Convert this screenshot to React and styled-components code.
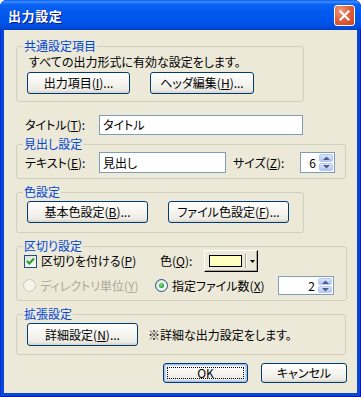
import React from "react";
import styled, { createGlobalStyle } from "styled-components";

const Global = createGlobalStyle`
  html, body { margin: 0; padding: 0; background: #ffffff; }
  body { font-family: "Noto Sans CJK JP", "Noto Sans", sans-serif; }
  * { box-sizing: border-box; }
`;

const FONT = `"Noto Sans CJK JP", "Noto Sans", sans-serif`;

const Window = styled.div`
  width: 361px;
  height: 397px;
  display: flex;
  flex-direction: column;
  background: #0846d8;
  border-radius: 7px 7px 0 0;
  overflow: hidden;
  box-shadow: inset 1px 0 0 #0831d9, inset -1px 0 0 #001ea0, inset 0 -1px 0 #001ea0;
`;

const TitleBar = styled.div`
  height: 30px;
  flex: none;
  display: flex;
  align-items: center;
  justify-content: space-between;
  padding: 0 6px 0 8px;
  background: linear-gradient(
    180deg,
    #0a5cf0 0%,
    #3b8cff 6%,
    #0c64f4 14%,
    #0058ee 40%,
    #0055ea 70%,
    #004de0 88%,
    #0040c8 100%
  );
`;

const TitleText = styled.span`
  font-family: ${FONT};
  font-size: 13px;
  font-weight: bold;
  color: #ffffff;
  letter-spacing: 0.6px;
  text-shadow: 1px 1px 0 #0a1c8a;
  line-height: 1;
`;

const CloseButton = styled.div`
  width: 21px;
  height: 21px;
  border: 1px solid #ffffff;
  border-radius: 3px;
  background: radial-gradient(circle at 30% 25%, #f09a7c 0%, #e2623f 45%, #c9421c 100%);
  display: flex;
  align-items: center;
  justify-content: center;
`;

const Client = styled.div`
  flex: 1;
  margin: 0 4px 4px 4px;
  background: #ece9d8;
  display: flex;
  flex-direction: column;
  padding: 16px 0 0 12px;
  font-family: ${FONT};
  font-size: 12px;
  font-feature-settings: "palt";
  color: #000000;
`;

const Group = styled.div`
  position: relative;
  width: ${(p) => p.$w}px;
  height: ${(p) => p.$h}px;
  margin-top: ${(p) => p.$mt || 0}px;
  border: 1px solid #d0d0bf;
  border-radius: 3px;
  padding: ${(p) => p.$pad};
  display: flex;
  flex-direction: column;
  gap: ${(p) => p.$gap || 0}px;
  flex: none;
`;

const Legend = styled.span`
  position: absolute;
  top: -9px;
  left: 6px;
  padding: 0 1px;
  background: #ece9d8;
  color: #0046d5;
  line-height: 16px;
`;

const Text = styled.span`
  line-height: 14px;
  white-space: nowrap;
  color: ${(p) => (p.$disabled ? "#aca899" : "inherit")};
`;

const Row = styled.div`
  display: flex;
  align-items: center;
  gap: ${(p) => p.$gap || 0}px;
  margin-top: ${(p) => p.$mt || 0}px;
  padding-left: ${(p) => p.$pl || 0}px;
  flex: none;
`;

const Label = styled.span`
  width: ${(p) => p.$w}px;
  flex: none;
  white-space: nowrap;
  line-height: 14px;
  color: ${(p) => (p.$disabled ? "#aca899" : "inherit")};
`;

const Button = styled.div`
  width: ${(p) => p.$w}px;
  height: ${(p) => p.$h || 22}px;
  flex: none;
  border: 1px solid #003c74;
  border-radius: 3px;
  background: linear-gradient(180deg, #ffffff 0%, #f6f5f0 45%, #ecebe5 85%, #d8d2c6 100%);
  display: flex;
  align-items: center;
  justify-content: center;
  white-space: nowrap;
  position: relative;
  line-height: 14px;
  box-shadow: ${(p) => (p.$default ? "inset 0 0 0 1px #a6c0ee, inset 0 0 0 2px #c8d8f6" : "none")};
`;

const FocusRing = styled.span`
  position: absolute;
  inset: 3px;
  border: 1px dotted #000000;
`;

const TextInput = styled.div`
  width: ${(p) => p.$w}px;
  height: ${(p) => p.$h || 20}px;
  flex: none;
  border: 1px solid #7f9db9;
  background: #ffffff;
  display: flex;
  align-items: center;
  justify-content: ${(p) => (p.$right ? "flex-end" : "flex-start")};
  padding: 0 4px 0 3px;
  line-height: 14px;
  white-space: nowrap;
`;

const Spinner = styled.div`
  width: ${(p) => p.$w}px;
  height: ${(p) => p.$h || 21}px;
  flex: none;
  border: 1px solid #7f9db9;
  background: #ffffff;
  display: flex;
  align-items: stretch;
  padding: 1px;
`;

const SpinValue = styled.span`
  flex: 1;
  display: flex;
  align-items: center;
  justify-content: flex-end;
  padding-right: 3px;
  line-height: 14px;
`;

const SpinButtons = styled.div`
  width: 14px;
  display: flex;
  flex-direction: column;
  gap: 1px;
`;

const SpinHalf = styled.div`
  flex: 1;
  border-radius: 2px;
  background: linear-gradient(180deg, #dce6fb 0%, #c2d3fa 60%, #b3c7f5 100%);
  border: 1px solid #b7c8f2;
  display: flex;
  align-items: center;
  justify-content: center;
`;

const CheckBox = styled.div`
  width: 13px;
  height: 13px;
  flex: none;
  border: 1px solid #1c5180;
  background: linear-gradient(135deg, #dcdcd7 0%, #ffffff 100%);
  display: flex;
  align-items: center;
  justify-content: center;
`;

const Option = styled.div`
  width: ${(p) => p.$w}px;
  flex: none;
  display: flex;
  align-items: center;
  gap: 4px;
`;

const ColorButton = styled.div`
  width: 54px;
  height: 22px;
  flex: none;
  background: #ece9d8;
  border-top: 1px solid #ffffff;
  border-left: 1px solid #ffffff;
  border-right: 1px solid #000000;
  border-bottom: 1px solid #000000;
  box-shadow: inset -1px -1px 0 #aca899;
  display: flex;
  align-items: center;
  padding: 0 0 0 4px;
  gap: 3px;
`;

const Swatch = styled.div`
  width: 33px;
  height: 12px;
  border: 1px solid #000000;
  background: ${(p) => p.$color};
`;

const Separator = styled.div`
  width: 2px;
  height: 14px;
  border-left: 1px solid #aca899;
  border-right: 1px solid #ffffff;
`;

const Footer = styled.div`
  display: flex;
  gap: 13px;
  margin-top: 8px;
  padding-left: 147px;
`;

const U = styled.u`
  text-underline-offset: 1px;
`;

const Arrow = ({ up }) => (
  <svg width="7" height="4" viewBox="0 0 7 4">
    {up ? (
      <path d="M0 4 L3.5 0.5 L7 4 Z" fill="#4d6185" />
    ) : (
      <path d="M0 0 L3.5 3.5 L7 0 Z" fill="#4d6185" />
    )}
  </svg>
);

const Radio = ({ checked, disabled }) => (
  <svg width="13" height="13" viewBox="0 0 13 13" style={{ flex: "none" }}>
    <defs>
      <linearGradient id="rb" x1="0" y1="0" x2="1" y2="1">
        <stop offset="0" stopColor="#dcdcd7" />
        <stop offset="1" stopColor="#ffffff" />
      </linearGradient>
      <radialGradient id="rd" cx="0.4" cy="0.35" r="0.7">
        <stop offset="0" stopColor="#7ee07e" />
        <stop offset="1" stopColor="#1e9b1e" />
      </radialGradient>
    </defs>
    <circle
      cx="6.5"
      cy="6.5"
      r="6"
      fill={disabled ? "#f5f4ea" : "url(#rb)"}
      stroke={disabled ? "#cac8bb" : "#1c5180"}
      strokeWidth="1"
    />
    {checked && <circle cx="6.5" cy="6.5" r="2.5" fill="url(#rd)" />}
  </svg>
);

export default function App() {
  return (
    <>
      <Global />
      <Window>
        <TitleBar>
          <TitleText>出力設定</TitleText>
          <CloseButton>
            <svg width="11" height="11" viewBox="0 0 11 11">
              <path d="M1.5 1.5 L9.5 9.5 M9.5 1.5 L1.5 9.5" stroke="#ffffff" strokeWidth="2.2" strokeLinecap="square" />
            </svg>
          </CloseButton>
        </TitleBar>
        <Client>
          <Group $w={288} $h={56} $pad="8px 0 0 12px" $gap={3}>
            <Legend>共通設定項目</Legend>
            <Text>すべての出力形式に有効な設定をします。</Text>
            <Row $gap={20} style={{ marginLeft: -2 }}>
              <Button $w={103}>出力項目(<U>I</U>)...</Button>
              <Button $w={104}>ヘッダ編集(<U>H</U>)...</Button>
            </Row>
          </Group>

          <Row $mt={13} $pl={9}>
            <Label $w={74}>タイトル(<U>T</U>):</Label>
            <TextInput $w={204}>タイトル</TextInput>
          </Row>

          <Group $w={330} $h={35} $mt={9} $pad="7px 0 0 8px">
            <Legend>見出し設定</Legend>
            <Row>
              <Label $w={74}>テキスト(<U>E</U>):</Label>
              <TextInput $w={127} $h={21}>見出し</TextInput>
              <Label $w={67} style={{ marginLeft: 7 }}>サイズ(<U>Z</U>):</Label>
              <Spinner $w={35}>
                <SpinValue>6</SpinValue>
                <SpinButtons>
                  <SpinHalf><Arrow up /></SpinHalf>
                  <SpinHalf><Arrow /></SpinHalf>
                </SpinButtons>
              </Spinner>
            </Row>
          </Group>

          <Group $w={288} $h={41} $mt={13} $pad="8px 0 0 10px">
            <Legend>色設定</Legend>
            <Row $gap={20}>
              <Button $w={121}>基本色設定(<U>B</U>)...</Button>
              <Button $w={121}>ファイル色設定(<U>F</U>)...</Button>
            </Row>
          </Group>

          <Group $w={331} $h={55} $mt={13} $pad="3px 0 0 7px" $gap={4}>
            <Legend>区切り設定</Legend>
            <Row>
              <Option $w={136}>
                <CheckBox>
                  <svg width="9" height="9" viewBox="0 0 9 9">
                    <path d="M1 4 L3.3 6.5 L8 1.5" fill="none" stroke="#21a121" strokeWidth="2" />
                  </svg>
                </CheckBox>
                <Text>区切りを付ける(<U>P</U>)</Text>
              </Option>
              <Label $w={44}>色(<U>Q</U>):</Label>
              <ColorButton>
                <Swatch $color="#ffffc0" />
                <Separator />
                <svg width="5" height="3" viewBox="0 0 5 3">
                  <path d="M0 0 L5 0 L2.5 3 Z" fill="#000000" />
                </svg>
              </ColorButton>
            </Row>
            <Row style={{ marginLeft: -1 }}>
              <Option $w={132}>
                <Radio disabled />
                <Text $disabled>ディレクトリ単位(<U>Y</U>)</Text>
              </Option>
              <Option $w={123}>
                <Radio checked />
                <Text>指定ファイル数(<U>X</U>)</Text>
              </Option>
              <Spinner $w={56} $h={19}>
                <SpinValue>2</SpinValue>
                <SpinButtons>
                  <SpinHalf><Arrow up /></SpinHalf>
                  <SpinHalf><Arrow /></SpinHalf>
                </SpinButtons>
              </Spinner>
            </Row>
          </Group>

          <Group $w={330} $h={41} $mt={13} $pad="8px 0 0 10px">
            <Legend>拡張設定</Legend>
            <Row $gap={10}>
              <Button $w={111} $h={23}>詳細設定(<U>N</U>)...</Button>
              <Text>※詳細な出力設定をします。</Text>
            </Row>
          </Group>

          <Footer>
            <Button $w={85} $h={20} $default>
              <FocusRing />
              OK
            </Button>
            <Button $w={86} $h={20}>キャンセル</Button>
          </Footer>
        </Client>
      </Window>
    </>
  );
}
